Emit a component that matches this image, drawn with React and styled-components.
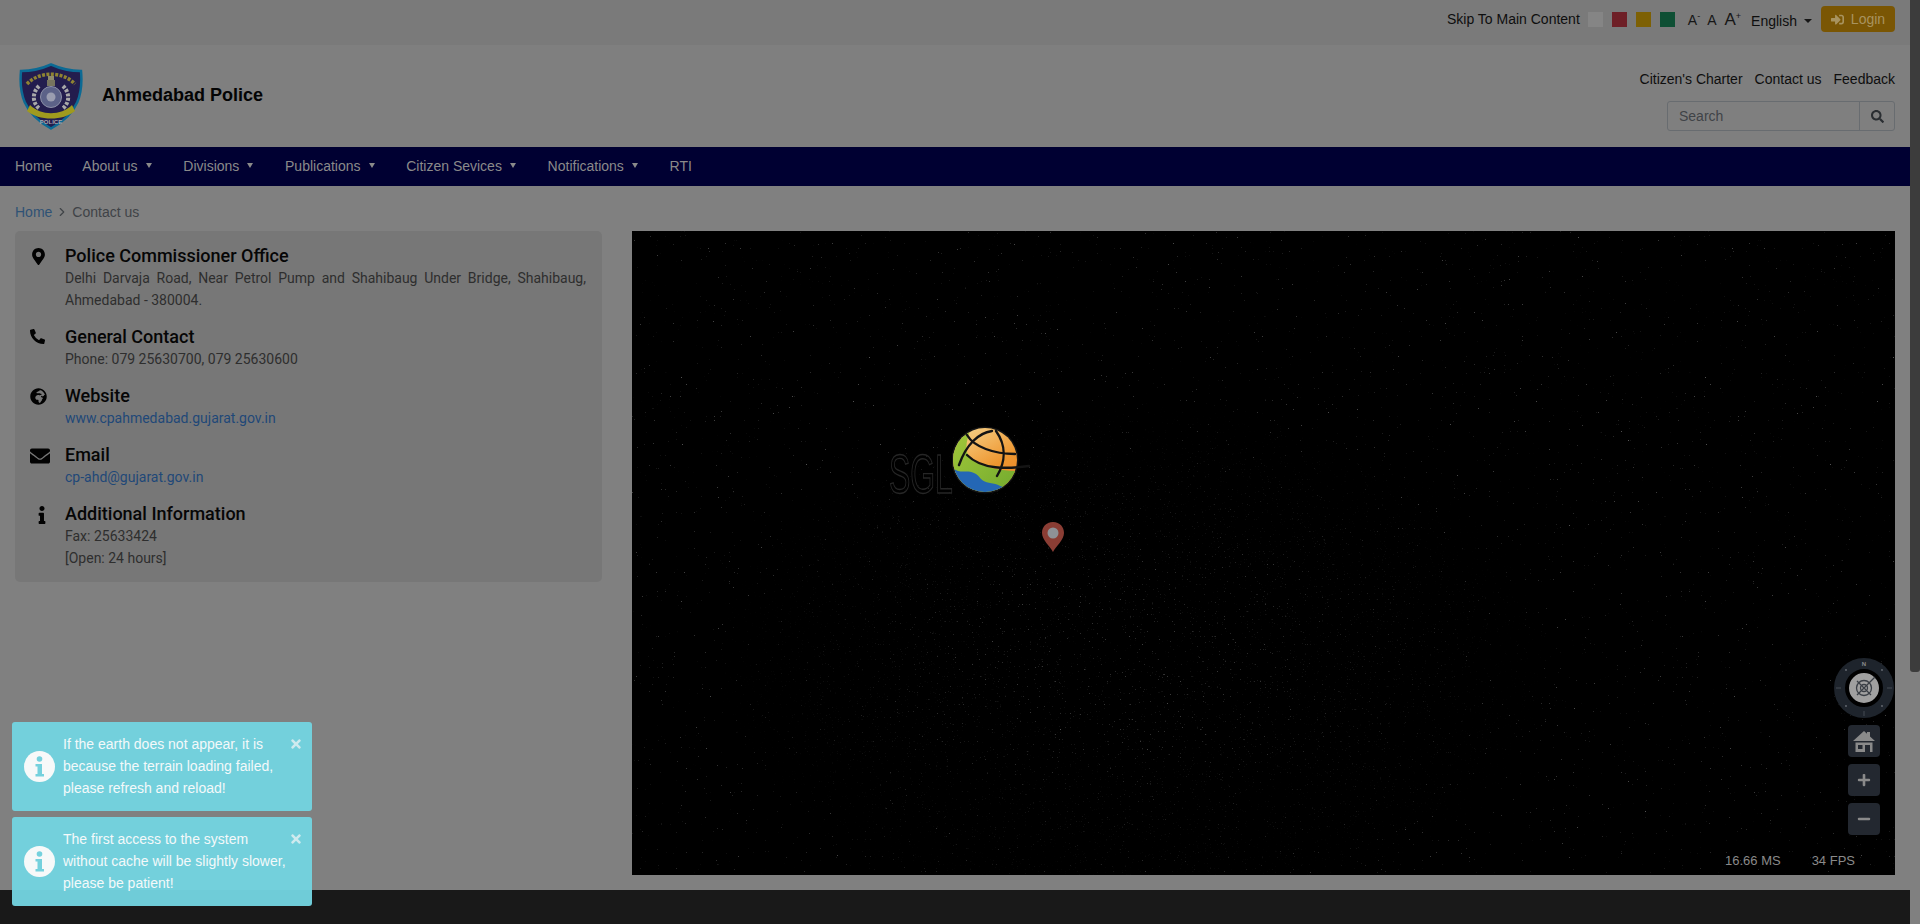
import React from 'react';
import styled, { createGlobalStyle } from 'styled-components';
import { FaSearch, FaSignInAlt, FaMapMarkerAlt, FaPhoneAlt, FaGlobeAfrica, FaEnvelope, FaInfo, FaTimes, FaPlus, FaMinus } from 'react-icons/fa';
import { FiChevronRight } from 'react-icons/fi';

const GlobalStyle = createGlobalStyle`
  html, body {
    margin: 0;
    height: 100%;
    overflow: hidden;
    background: #808080;
    font-family: "Liberation Sans", Arial, sans-serif;
  }
  * { box-sizing: border-box; }
`;

const Shell = styled.div`
  display: flex;
  height: 924px;
  position: relative;
  overflow: hidden;
`;

const Page = styled.div`
  flex: 1;
  min-width: 0;
  display: flex;
  flex-direction: column;
`;

const ScrollTrack = styled.div`
  width: 10px;
  background: #808080;
`;

const ScrollThumb = styled.div`
  height: 672px;
  background: #3c3c3c;
  border-radius: 0 0 3px 3px;
`;

const TopBar = styled.div`
  height: 45px;
  background: #7a7a7a;
  display: flex;
  align-items: center;
  justify-content: flex-end;
  padding-right: 15px;
  font-size: 14px;
  color: #0e0e0e;
`;

const SkipLink = styled.a`
  margin-right: 8px;
  margin-bottom: 8px;
`;

const Swatch = styled.span`
  width: 15px;
  height: 15px;
  margin-right: 9px;
  margin-bottom: 6px;
  background: ${(p) => p.$color};
`;

const FontSize = styled.span`
  font-size: ${(p) => p.$size}px;
  margin-left: ${(p) => p.$gap}px;
  margin-bottom: 6px;
  color: #161616;
  sup {
    font-size: 9px;
    vertical-align: 6px;
    line-height: 0;
  }
`;

const Language = styled.span`
  margin-left: 10px;
  margin-bottom: 3px;
  display: flex;
  align-items: center;
  gap: 7px;
  &::after {
    content: '';
    border-top: 4px solid #161616;
    border-left: 4px solid transparent;
    border-right: 4px solid transparent;
  }
`;

const LoginButton = styled.button`
  margin-left: 9px;
  margin-bottom: 7px;
  width: 74px;
  height: 26px;
  border: 0;
  border-radius: 4px;
  background: #7a5604;
  color: #a8935f;
  font: 14px "Liberation Sans", Arial, sans-serif;
  display: flex;
  align-items: center;
  justify-content: center;
  gap: 7px;
`;

const Header = styled.header`
  height: 102px;
  display: flex;
  justify-content: space-between;
  padding: 18px 15px 0 19px;
  background: #7f7f7f;
`;

const Brand = styled.div`
  display: flex;
  align-items: flex-start;
  gap: 19px;
`;

const BrandName = styled.h1`
  margin: 21px 0 0;
  font-size: 18px;
  line-height: 22px;
  font-weight: 700;
  color: #040404;
`;

const HeaderRight = styled.div`
  display: flex;
  flex-direction: column;
  align-items: flex-end;
  padding-top: 8px;
`;

const HeaderLinks = styled.div`
  display: flex;
  gap: 12px;
  font-size: 14px;
  line-height: 16px;
  color: #0e0e0e;
`;

const SearchBox = styled.div`
  display: flex;
  margin-top: 14px;
  height: 30px;
  border: 1px solid #686c70;
  border-radius: 3px;
`;

const SearchInput = styled.div`
  width: 192px;
  padding-left: 11px;
  font-size: 14px;
  line-height: 28px;
  color: #3f4347;
  border-right: 1px solid #686c70;
`;

const SearchButton = styled.div`
  width: 34px;
  display: flex;
  align-items: center;
  justify-content: center;
  color: #2a2e32;
  font-size: 13px;
`;

const Nav = styled.nav`
  height: 39px;
  padding: 0 0 2px 15px;
  background: #000032;
  display: flex;
  align-items: center;
  gap: 30px;
  font-size: 14px;
  color: #8a8a8a;
`;

const NavItem = styled.a`
  display: flex;
  align-items: center;
  gap: 8px;
  ${(p) => p.$menu && `
    margin-right: 1.7px;
    &::after {
      content: '';
      border-top: 5px solid #8a8a8a;
      border-left: 3px solid transparent;
      border-right: 3px solid transparent;
    }
  `}
`;

const Crumbs = styled.div`
  height: 45px;
  padding: 18px 15px 0;
  font-size: 14px;
  line-height: 16px;
  color: #3f4347;
  display: flex;
  gap: 3px;
  align-items: flex-start;
`;

const CrumbLink = styled.a`
  color: #2f5275;
`;

const CrumbChevron = styled(FiChevronRight)`
  margin-top: 1px;
  color: #3f4347;
`;

const Main = styled.main`
  flex: 1;
  display: grid;
  grid-template-columns: 587px 1263px;
  gap: 30px;
  padding: 0 15px;
  align-items: start;
`;

const ContactCard = styled.section`
  height: 351px;
  background: #777777;
  border-radius: 5px;
  padding: 14px 16px 0 15px;
  font-family: Roboto, sans-serif;
`;

const ContactRow = styled.div`
  display: grid;
  grid-template-columns: 35px 1fr;
  margin-bottom: ${(p) => p.$gap}px;
`;

const ContactIcon = styled.span`
  color: #020202;
  font-size: ${(p) => p.$size || 17}px;
  line-height: 17px;
  padding-top: ${(p) => p.$top ?? 3}px;
  padding-left: ${(p) => p.$left || 0}px;
`;

const ContactTitle = styled.h4`
  margin: 0;
  font-size: 18px;
  line-height: 22px;
  font-weight: 500;
  color: #060606;
`;

const ContactText = styled.p`
  margin: 0;
  font-size: 14px;
  line-height: 22px;
  color: #2e2e2e;
  text-align: ${(p) => (p.$justify ? 'justify' : 'left')};
`;

const ContactLink = styled.a`
  display: block;
  font-size: 14px;
  line-height: 22px;
  color: #1f4878;
`;

const MapBox = styled.div`
  height: 644px;
  background: #000;
  position: relative;
  overflow: hidden;
`;

const StarNoise = styled.svg`
  position: absolute;
  inset: 0;
  width: 100%;
  height: 100%;
  ${(p) => p.$dense && `
    -webkit-mask-image: radial-gradient(ellipse 420px 260px at 500px 430px, #000 30%, transparent 100%);
    mask-image: radial-gradient(ellipse 420px 260px at 500px 430px, #000 30%, transparent 100%);
  `}
`;

const Marker = styled.svg`
  position: absolute;
  left: 409px;
  top: 290px;
`;

const LogoMark = styled.svg`
  position: absolute;
  left: 320px;
  top: 194px;
`;

const LogoText = styled.span`
  position: absolute;
  left: 257px;
  top: 215px;
  font: 400 56px/56px "Liberation Sans", sans-serif;
  color: transparent;
  -webkit-text-stroke: 1.4px #262626;
  transform: scaleX(0.57);
  transform-origin: left top;
`;

const Compass = styled.div`
  position: absolute;
  right: 1px;
  top: 427px;
  width: 60px;
  height: 60px;
  border-radius: 50%;
  background: #1e242c;
  display: flex;
  align-items: center;
  justify-content: center;
`;

const CompassTicks = styled.svg`
  position: absolute;
  inset: 0;
`;

const CompassInner = styled.div`
  position: relative;
  width: 38px;
  height: 38px;
  border-radius: 50%;
  background: #a0a0a0;
  border: 4px solid #000;
  display: flex;
  align-items: center;
  justify-content: center;
`;

const MapControls = styled.div`
  position: absolute;
  right: 15px;
  top: 494px;
  display: flex;
  flex-direction: column;
  gap: 7px;
`;

const MapButton = styled.div`
  width: 32px;
  height: 32px;
  border-radius: 4px;
  background: #232830;
  color: #8a8a8a;
  display: flex;
  align-items: center;
  justify-content: center;
  font-size: 14px;
`;

const MapStats = styled.div`
  position: absolute;
  right: 40px;
  bottom: 6px;
  display: flex;
  gap: 31px;
  font-size: 13px;
  line-height: 16px;
  color: #8a8a8a;
`;

const Footer = styled.footer`
  height: 34px;
  margin-top: auto;
  background: #191919;
`;

const Toasts = styled.div`
  position: absolute;
  left: 12px;
  bottom: 18px;
  display: flex;
  flex-direction: column;
  gap: 6px;
`;

const Toast = styled.div`
  position: relative;
  width: 300px;
  height: 89px;
  border-radius: 3px;
  background: rgba(115, 211, 224, 0.96);
  color: #f4f9fa;
  font-size: 14px;
  line-height: 22px;
  padding: 11px 22px 0 51px;
`;

const ToastIcon = styled.svg`
  position: absolute;
  left: 12px;
  top: 29px;
`;

const ToastClose = styled(FaTimes)`
  position: absolute;
  right: 9px;
  top: 15px;
  font-size: 14px;
  color: #cfeaee;
`;

const navItems = [
  { label: 'Home' },
  { label: 'About us', menu: true },
  { label: 'Divisions', menu: true },
  { label: 'Publications', menu: true },
  { label: 'Citizen Sevices', menu: true },
  { label: 'Notifications', menu: true },
  { label: 'RTI' },
];

const Badge = () => (
  <svg width="64" height="67" viewBox="0 0 64 67">
    <path d="M32 1.5 C42 6 52 8 62 8 C64 30 60 50 32 65.5 C4 50 0 30 2 8 C12 8 22 6 32 1.5Z" fill="#231d4e" stroke="#0c6a94" strokeWidth="2.5" />
    <path d="M8 21 C20 8 44 8 56 21" fill="none" stroke="#8f8332" strokeWidth="3.5" strokeDasharray="3 1.4" />
    <rect x="29" y="13" width="6" height="4" fill="#8f8a6c" />
    <rect x="28" y="17" width="8" height="6" fill="#77745f" />
    <circle cx="32" cy="34" r="10.5" fill="#5c6288" stroke="#8d91a8" strokeWidth="1" />
    <circle cx="32" cy="34" r="4.5" fill="#9a9db0" />
    <path d="M20 23 C12 31 14 41 21 46 M44 23 C52 31 50 41 43 46" fill="none" stroke="#a9a9a9" strokeWidth="4" strokeDasharray="3 1.4" />
    <path d="M11 42 C22 53 42 53 53 42 L56 48 C44 58 20 58 8 48Z" fill="#a09a1e" />
    <text x="32" y="61" textAnchor="middle" fontFamily="Liberation Sans, sans-serif" fontSize="6" fontWeight="700" fill="#a8a8b0">POLICE</text>
  </svg>
);

const Globe = () => (
  <LogoMark width="84" height="72" viewBox="0 0 84 72">
    <defs>
      <linearGradient id="orange" x1="0.2" y1="0" x2="0.8" y2="1">
        <stop offset="0" stopColor="#f6d38c" />
        <stop offset="0.6" stopColor="#ee962f" />
        <stop offset="1" stopColor="#e8822a" />
      </linearGradient>
      <linearGradient id="green" x1="0" y1="0" x2="1" y2="1">
        <stop offset="0" stopColor="#a5c83a" />
        <stop offset="1" stopColor="#6fa92e" />
      </linearGradient>
      <clipPath id="ball"><circle cx="33" cy="35" r="32" /></clipPath>
    </defs>
    <circle cx="33" cy="35" r="33.5" fill="#141414" />
    <g clipPath="url(#ball)">
      <rect x="0" y="0" width="70" height="70" fill="url(#orange)" />
      <path d="M0 0 H20 C14 16 12 26 18 32 C28 42 48 46 68 46 V70 H0Z" fill="url(#green)" />
      <path d="M0 42 C8 50 14 44 22 48 C28 50 28 57 38 58 C46 59 50 62 56 64 V70 H0Z" fill="#2467b5" />
    </g>
    <path d="M15 10 C22 22 42 29 63 29 M40 6 C26 8 14 20 7 40 M44 6 C54 20 54 36 45 51 M15 30 C30 45 55 44 77 41" fill="none" stroke="#141414" strokeWidth="2.4" strokeLinecap="round" />
  </LogoMark>
);

const HomeGlyph = () => (
  <svg width="24" height="24" viewBox="0 0 24 24">
    <path fill="#8a8a8a" d="M1 12 L12 2 L15 4.7 V3 H18 V7.5 L23 12Z" />
    <path fill="#8a8a8a" fillRule="evenodd" d="M3.5 13.5 H20.5 V23 H18 V16 H13 V23 H3.5Z M6 16 H10.5 V20 H6Z" />
  </svg>
);

const CompassNeedle = () => (
  <svg width="26" height="26" viewBox="0 0 26 26" fill="none" stroke="#3a3f46" strokeWidth="1.3">
    <circle cx="13" cy="13" r="7.5" />
    <circle cx="13" cy="13" r="3.5" />
    <path d="M6 6 L20 20 M6 20 L24 2" />
  </svg>
);

const Noise = ({ id, freq, seed, gain, cut, dense }) => (
  <StarNoise $dense={dense}>
    <filter id={id} x="0" y="0" width="100%" height="100%" colorInterpolationFilters="sRGB">
      <feTurbulence type="fractalNoise" baseFrequency={freq} numOctaves="2" seed={seed} />
      <feColorMatrix values={`${gain} 0 0 0 ${cut} ${gain} 0 0 0 ${cut} ${gain} 0 0 0 ${cut} 0 0 0 0 1`} />
    </filter>
    <rect width="100%" height="100%" filter={`url(#${id})`} />
  </StarNoise>
);

const App = () => (
  <>
    <GlobalStyle />
    <Shell>
      <Page>
        <TopBar>
          <SkipLink>Skip To Main Content</SkipLink>
          <Swatch $color="#858585" />
          <Swatch $color="#6e1f26" />
          <Swatch $color="#7d6004" />
          <Swatch $color="#0e4f34" />
          <FontSize $size={14} $gap={4}>A<sup>-</sup></FontSize>
          <FontSize $size={14} $gap={7}>A</FontSize>
          <FontSize $size={17} $gap={8}>A<sup>+</sup></FontSize>
          <Language>English</Language>
          <LoginButton><FaSignInAlt size={13} />Login</LoginButton>
        </TopBar>
        <Header>
          <Brand>
            <Badge />
            <BrandName>Ahmedabad Police</BrandName>
          </Brand>
          <HeaderRight>
            <HeaderLinks>
              <a>Citizen's Charter</a>
              <a>Contact us</a>
              <a>Feedback</a>
            </HeaderLinks>
            <SearchBox>
              <SearchInput>Search</SearchInput>
              <SearchButton><FaSearch /></SearchButton>
            </SearchBox>
          </HeaderRight>
        </Header>
        <Nav>
          {navItems.map((item) => (
            <NavItem key={item.label} $menu={item.menu}>{item.label}</NavItem>
          ))}
        </Nav>
        <Crumbs>
          <CrumbLink>Home</CrumbLink>
          <CrumbChevron size={14} />
          <span>Contact us</span>
        </Crumbs>
        <Main>
          <ContactCard>
            <ContactRow $gap={15}>
              <ContactIcon><FaMapMarkerAlt /></ContactIcon>
              <div>
                <ContactTitle>Police Commissioner Office</ContactTitle>
                <ContactText $justify>Delhi Darvaja Road, Near Petrol Pump and Shahibaug Under Bridge, Shahibaug, Ahmedabad - 380004.</ContactText>
              </div>
            </ContactRow>
            <ContactRow $gap={15}>
              <ContactIcon $size={15}><FaPhoneAlt /></ContactIcon>
              <div>
                <ContactTitle>General Contact</ContactTitle>
                <ContactText>Phone: 079 25630700, 079 25630600</ContactText>
              </div>
            </ContactRow>
            <ContactRow $gap={15}>
              <ContactIcon><FaGlobeAfrica /></ContactIcon>
              <div>
                <ContactTitle>Website</ContactTitle>
                <ContactLink>www.cpahmedabad.gujarat.gov.in</ContactLink>
              </div>
            </ContactRow>
            <ContactRow $gap={15}>
              <ContactIcon $size={20} $top={2}><FaEnvelope /></ContactIcon>
              <div>
                <ContactTitle>Email</ContactTitle>
                <ContactLink>cp-ahd@gujarat.gov.in</ContactLink>
              </div>
            </ContactRow>
            <ContactRow $gap={0}>
              <ContactIcon $size={18} $left={3}><FaInfo /></ContactIcon>
              <div>
                <ContactTitle>Additional Information</ContactTitle>
                <ContactText>Fax: 25633424</ContactText>
                <ContactText>[Open: 24 hours]</ContactText>
              </div>
            </ContactRow>
          </ContactCard>
          <MapBox>
            <Noise id="stars" freq="0.75" seed="4" gain="2.4" cut="-1.85" />
            <Noise id="starsDense" freq="0.6" seed="11" gain="1.6" cut="-1.15" dense />
            <LogoText>SGL</LogoText>
            <Globe />
            <Marker width="24" height="32" viewBox="0 0 24 32">
              <path d="M12 1 C5 1 1 6 1 12 C1 19 9 25 12 31 C15 25 23 19 23 12 C23 6 19 1 12 1Z" fill="#8a3d34" />
              <circle cx="12" cy="12" r="5.5" fill="#8e9297" />
            </Marker>
            <Compass>
              <CompassTicks width="60" height="60" viewBox="0 0 60 60">
                <text x="30" y="8" textAnchor="middle" fontFamily="Liberation Sans, sans-serif" fontSize="6" fontWeight="700" fill="#8a8a8a">N</text>
                <g fill="#6a6f76">
                  <circle cx="12" cy="12" r="0.9" />
                  <circle cx="48" cy="12" r="0.9" />
                  <circle cx="12" cy="48" r="0.9" />
                  <circle cx="48" cy="48" r="0.9" />
                </g>
                <path d="M2 30 H7 M53 30 H58 M30 53 V58" stroke="#454a52" strokeWidth="1" />
              </CompassTicks>
              <CompassInner><CompassNeedle /></CompassInner>
            </Compass>
            <MapControls>
              <MapButton><HomeGlyph /></MapButton>
              <MapButton><FaPlus /></MapButton>
              <MapButton><FaMinus /></MapButton>
            </MapControls>
            <MapStats>
              <span>16.66 MS</span>
              <span>34 FPS</span>
            </MapStats>
          </MapBox>
        </Main>
        <Footer />
      </Page>
      <ScrollTrack>
        <ScrollThumb />
      </ScrollTrack>
      <Toasts>
        {[
          'If the earth does not appear, it is because the terrain loading failed, please refresh and reload!',
          'The first access to the system without cache will be slightly slower, please be patient!',
        ].map((message) => (
          <Toast key={message}>
            <ToastIcon width="31" height="31" viewBox="0 0 31 31">
              <circle cx="15.5" cy="15.5" r="15.5" fill="#f7f9f9" />
              <circle cx="15.5" cy="8" r="2.8" fill="#75d1dd" />
              <path d="M11.5 13 H18 V23 H20 V25.5 H11.5 V23 H13.5 V15.5 H11.5Z" fill="#75d1dd" />
            </ToastIcon>
            {message}
            <ToastClose />
          </Toast>
        ))}
      </Toasts>
    </Shell>
  </>
);

export default App;
